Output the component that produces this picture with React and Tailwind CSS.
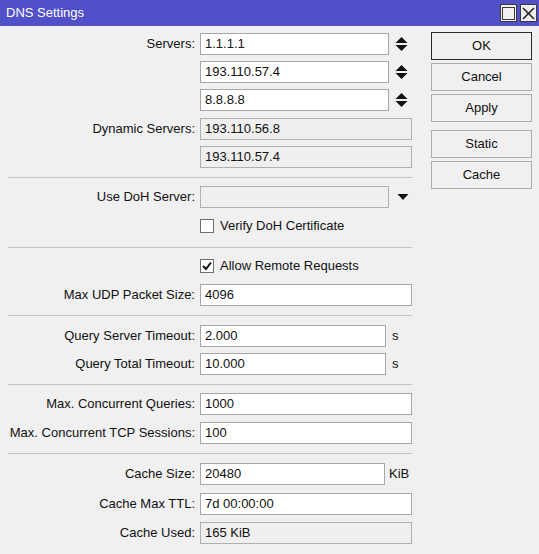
import React from "react";

function Label({ children }) {
  return (
    <div className="w-[188px] shrink-0 pr-[1px] text-right whitespace-nowrap leading-[22px]">
      {children}
    </div>
  );
}

function Field({ value, w, disabled, children }) {
  return (
    <div
      className={
        "h-[22px] border flex items-center pl-[4px] whitespace-nowrap overflow-hidden " +
        (disabled ? "bg-[#efefef] border-[#b0b0b0] " : "bg-white border-[#a7a7a7] ") +
        w
      }
    >
      {value}
      {children}
    </div>
  );
}

function Spinner() {
  return (
    <svg width="13" height="16" viewBox="0 0 13 16" className="ml-[6px]">
      <polygon points="6.5,1 12.5,7 0.5,7" fill="#111" />
      <polygon points="0.5,9 12.5,9 6.5,15" fill="#111" />
    </svg>
  );
}

function Sep({ mt }) {
  return <div className={"h-0 border-t border-[#c4c4c4] w-[404px] " + mt}></div>;
}

function Checkbox({ checked }) {
  return (
    <div className="w-[14px] h-[14px] border border-[#6e6e6e] bg-white flex items-center justify-center">
      {checked && (
        <svg width="12" height="12" viewBox="0 0 12 12">
          <polyline points="2,6 5,9 10,2.5" fill="none" stroke="#111" strokeWidth="2" />
        </svg>
      )}
    </div>
  );
}

function Row({ label, mt, children }) {
  return (
    <div className={"flex items-center h-[22px] " + mt}>
      <Label>{label}</Label>
      <div className="ml-[4px] flex items-center">{children}</div>
    </div>
  );
}

function Btn({ children, primary, mt }) {
  return (
    <div
      className={
        "w-[101px] h-[28px] flex items-center justify-center bg-[#f0f0f0] border " +
        (primary ? "border-[#2a2a2a] " : "border-[#adadad] ") +
        mt
      }
    >
      {children}
    </div>
  );
}

export default function App() {
  return (
    <div
      className="w-[539px] h-[554px] bg-[#f0f0f0] text-[13px] text-[#111] flex flex-col overflow-hidden"
      style={{ fontFamily: '"Liberation Sans", Arial, sans-serif' }}
    >
      <div className="h-[26px] bg-[#5050c9] flex items-center shrink-0">
        <div className="pl-[6px] text-white text-[13px] flex-1">DNS Settings</div>
        <div className="flex items-center gap-[3px] pr-[2px]">
          <div className="w-[17px] h-[18px] bg-[#f0f0f0] border border-[#3a3a3a] flex items-center justify-center">
            <div className="w-[13px] h-[13px] border border-[#3a3a3a]"></div>
          </div>
          <div className="w-[17px] h-[18px] bg-[#f0f0f0] border border-[#3a3a3a] flex items-center justify-center">
            <svg width="13" height="13" viewBox="0 0 13 13">
              <line x1="1" y1="1" x2="12" y2="12" stroke="#222" strokeWidth="1.6" />
              <line x1="12" y1="1" x2="1" y2="12" stroke="#222" strokeWidth="1.6" />
            </svg>
          </div>
        </div>
      </div>
      <div className="flex">
        <div className="w-[423px] pl-[8px] flex flex-col">
          <Row label="Servers:" mt="mt-[7px]">
            <Field value="1.1.1.1" w="w-[189px]" />
            <Spinner />
          </Row>
          <Row label="" mt="mt-[6px]">
            <Field value="193.110.57.4" w="w-[189px]" />
            <Spinner />
          </Row>
          <Row label="" mt="mt-[6px]">
            <Field value="8.8.8.8" w="w-[189px]" />
            <Spinner />
          </Row>
          <Row label="Dynamic Servers:" mt="mt-[7px]">
            <Field value="193.110.56.8" w="w-[212px]" disabled />
          </Row>
          <Row label="" mt="mt-[6px]">
            <Field value="193.110.57.4" w="w-[212px]" disabled />
          </Row>
          <Sep mt="mt-[9px]" />
          <Row label="Use DoH Server:" mt="mt-[8px]">
            <Field value="" w="w-[189px]" disabled />
            <svg width="12" height="8" viewBox="0 0 12 8" className="ml-[8px]">
              <polygon points="0.5,1 11.5,1 6,7" fill="#111" />
            </svg>
          </Row>
          <Row label="" mt="mt-[7px]">
            <Checkbox />
            <span className="ml-[6px]">Verify DoH Certificate</span>
          </Row>
          <Sep mt="mt-[10px]" />
          <Row label="" mt="mt-[7px]">
            <Checkbox checked />
            <span className="ml-[6px]">Allow Remote Requests</span>
          </Row>
          <Row label="Max UDP Packet Size:" mt="mt-[7px]">
            <Field value="4096" w="w-[212px]" />
          </Row>
          <Sep mt="mt-[9px]" />
          <Row label="Query Server Timeout:" mt="mt-[9px]">
            <Field value="2.000" w="w-[186px]" />
            <span className="ml-[6px]">s</span>
          </Row>
          <Row label="Query Total Timeout:" mt="mt-[6px]">
            <Field value="10.000" w="w-[186px]" />
            <span className="ml-[6px]">s</span>
          </Row>
          <Sep mt="mt-[9px]" />
          <Row label="Max. Concurrent Queries:" mt="mt-[8px]">
            <Field value="1000" w="w-[212px]" />
          </Row>
          <Row label="Max. Concurrent TCP Sessions:" mt="mt-[7px]">
            <Field value="100" w="w-[212px]" />
          </Row>
          <Sep mt="mt-[9px]" />
          <Row label="Cache Size:" mt="mt-[9px]">
            <Field value="20480" w="w-[185px]" />
            <span className="ml-[4px]">KiB</span>
          </Row>
          <Row label="Cache Max TTL:" mt="mt-[8px]">
            <Field value="7d 00:00:00" w="w-[212px]" />
          </Row>
          <Row label="Cache Used:" mt="mt-[7px]">
            <Field value="165 KiB" w="w-[212px]" disabled />
          </Row>
        </div>
        <div className="ml-[8px] flex flex-col">
          <Btn primary mt="mt-[6px]">OK</Btn>
          <Btn mt="mt-[3px]">Cancel</Btn>
          <Btn mt="mt-[3px]">Apply</Btn>
          <Btn mt="mt-[8px]">Static</Btn>
          <Btn mt="mt-[3px]">Cache</Btn>
        </div>
      </div>
    </div>
  );
}
